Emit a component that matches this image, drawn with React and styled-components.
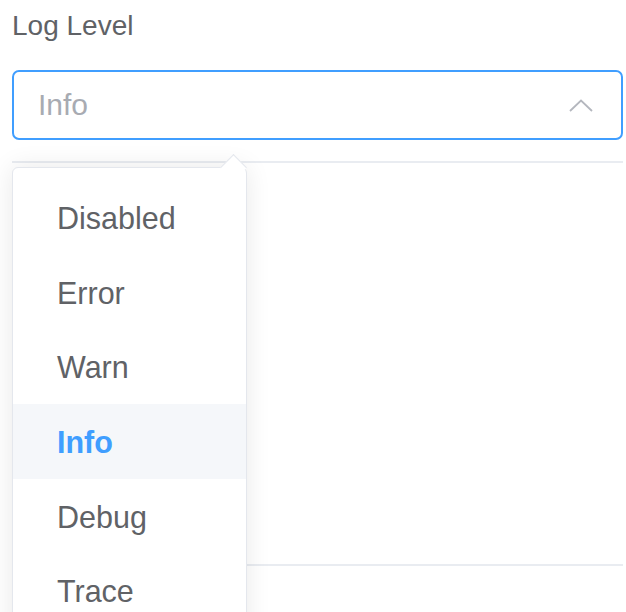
import React from "react";
import styled, { createGlobalStyle } from "styled-components";

const levels = ["Disabled", "Error", "Warn", "Info", "Debug", "Trace"];

const GlobalStyle = createGlobalStyle`
  html, body {
    margin: 0;
    padding: 0;
    background: #fff;
    overflow: hidden;
  }
  body {
    font-family: "Liberation Sans", Arial, Helvetica, sans-serif;
  }
`;

const Page = styled.div`
  position: relative;
  width: 611px;
  padding: 0 3px 0 12px;
  height: 612px;
`;

const Label = styled.div`
  font-size: 28px;
  line-height: 52px;
  color: #606266;
  margin-bottom: 18px;
`;

const SelectBox = styled.div`
  box-sizing: border-box;
  height: 70px;
  border: 2px solid #409eff;
  border-radius: 7px;
  display: flex;
  align-items: center;
  justify-content: space-between;
  padding: 0 28px 0 24px;
`;

const Placeholder = styled.span`
  font-size: 30px;
  color: #a8abb2;
`;

const Divider = styled.div`
  height: 2px;
  background: #e9ecf1;
  margin-top: ${(p) => p.$top}px;
`;

const Dropdown = styled.div`
  position: absolute;
  top: 167px;
  left: 12px;
  width: 235px;
  box-sizing: border-box;
  background: #fff;
  border: 1px solid #e4e7ed;
  border-radius: 6px;
  box-shadow: 0 0 26px rgba(0, 0, 0, 0.09);
  padding: 12px 0;

  &::before {
    content: "";
    position: absolute;
    top: -10px;
    left: 211px;
    width: 18px;
    height: 18px;
    background: #fff;
    border-top: 1px solid #e4e7ed;
    border-left: 1px solid #e4e7ed;
    transform: rotate(45deg);
  }
`;

const Item = styled.div`
  box-sizing: border-box;
  height: 74.67px;
  line-height: 74.67px;
  padding: 2px 0 0 44px;
  font-size: 30.5px;
  color: ${(p) => (p.$active ? "#409eff" : "#606266")};
  font-weight: ${(p) => (p.$active ? 700 : 400)};
  background: ${(p) => (p.$active ? "#f5f7fa" : "transparent")};
  line-height: 72.67px;
`;

const Chevron = () => (
  <svg width="24" height="13" viewBox="0 0 24 13" fill="none">
    <path d="M1 12 L12 1.5 L23 12" stroke="#b4b7be" strokeWidth="1.8" />
  </svg>
);

export default function App() {
  return (
    <>
      <GlobalStyle />
      <Page>
        <Label>Log Level</Label>
        <SelectBox>
          <Placeholder>Info</Placeholder>
          <Chevron />
        </SelectBox>
        <Divider $top={21} />
        <Divider $top={401} />
        <Dropdown>
          {levels.map((l) => (
            <Item key={l} $active={l === "Info"}>
              {l}
            </Item>
          ))}
        </Dropdown>
      </Page>
    </>
  );
}
